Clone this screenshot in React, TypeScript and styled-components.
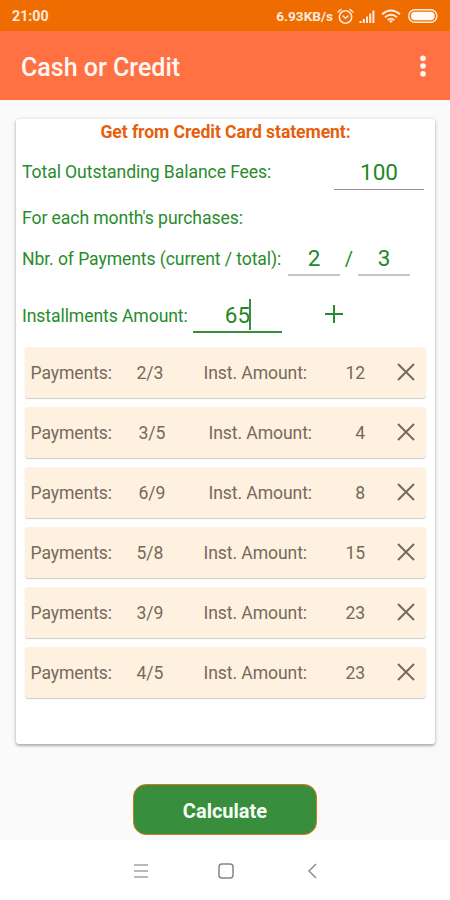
import React from "react";
import styled, { createGlobalStyle } from "styled-components";

const GlobalStyle = createGlobalStyle`
  *, *::before, *::after { box-sizing: border-box; }
  body { margin: 0; background: #fafafa; font-family: Roboto, sans-serif; }
`;

const Screen = styled.div`
  display: flex;
  flex-direction: column;
  width: 450px;
  height: 900px;
  overflow: hidden;
  background: #fafafa;
`;

const StatusBar = styled.div`
  display: flex;
  align-items: center;
  height: 31px;
  padding: 1px 12px 0 12px;
  background: #ef6c00;
  color: #ffe9dc;
  font-size: 13.6px;
  font-weight: 700;
  line-height: 16px;
  white-space: nowrap;
  flex: none;
`;

const Clock = styled.span`
  flex: 1;
  font-size: 14.2px;
`;

const StatusIcon = styled.svg<{ $gap: number }>`
  display: block;
  flex: none;
  margin-left: ${(p) => p.$gap}px;
  fill: none;
  stroke: #ffe9dc;
`;

const AppBar = styled.header`
  display: flex;
  align-items: center;
  justify-content: space-between;
  height: 69px;
  padding: 4px 24px 0 21px;
  background: #ff7043;
  flex: none;
`;

const Title = styled.h1`
  margin: 0;
  color: #fff8f4;
  font-size: 25px;
  font-weight: 500;
  line-height: 30px;
  white-space: nowrap;
`;

const MenuButton = styled.button`
  display: flex;
  margin-top: -4px;
  padding: 0;
  border: 0;
  background: none;
`;

const Card = styled.main`
  display: flex;
  flex-direction: column;
  width: 419px;
  height: 625px;
  margin: 19px 0 0 16px;
  background: #fff;
  border-radius: 3px;
  box-shadow: 0 2px 2px rgba(0, 0, 0, 0.16), 0 1px 4px rgba(0, 0, 0, 0.24);
  flex: none;
`;

const Heading = styled.h2`
  margin: 0;
  height: 26px;
  color: #e65f0c;
  font-size: 17.6px;
  font-weight: 700;
  letter-spacing: -0.09px;
  line-height: 26px;
  text-align: center;
  white-space: nowrap;
`;

const FieldRow = styled.div<{ $height: number; $drop?: number }>`
  display: flex;
  align-items: center;
  height: ${(p) => p.$height}px;
  padding-top: ${(p) => p.$drop ?? 0}px;
  padding-left: 6px;
  flex: none;
`;

const Label = styled.span<{ $width?: number }>`
  width: ${(p) => (p.$width ? `${p.$width}px` : "auto")};
  flex: none;
  margin-top: -1px;
  color: #288c2d;
  font-size: 17.6px;
  letter-spacing: -0.09px;
  line-height: 24px;
  white-space: nowrap;
`;

const Field = styled.div<{ $width: number; $active?: boolean; $light?: boolean }>`
  display: flex;
  align-items: center;
  justify-content: center;
  width: ${(p) => p.$width}px;
  height: 34px;
  flex: none;
  border-bottom: ${(p) => (p.$active ? "2px solid #388e3c" : `${p.$light ? 2 : 1.5}px solid ${p.$light ? "#c6c6c6" : "#929292"}`)};
  color: #1f8726;
  font-size: 22.5px;
  line-height: 30px;
`;

const Caret = styled.span`
  width: 2px;
  height: 31px;
  margin: -2px -1px 0 -1px;
  background: #388e3c;
`;

const Slash = styled.span`
  width: 18px;
  color: #288c2d;
  font-size: 20px;
  line-height: 30px;
  text-align: center;
`;

const AddButton = styled.button`
  display: flex;
  margin: -5px 0 0 43px;
  padding: 0;
  border: 0;
  background: none;
`;

const PaymentList = styled.ul`
  display: flex;
  flex-direction: column;
  gap: 9px;
  margin: 0;
  padding: 1px 9px 0 9px;
  list-style: none;
`;

const PaymentItem = styled.li<{ $shift: boolean }>`
  display: grid;
  grid-template-columns: ${(p) => (p.$shift ? "108px 70px" : "106px 67px")} 1fr 56px 31px;
  align-items: center;
  height: 51px;
  padding: 1px 11px 0 5.5px;
  border-radius: 3px;
  background: #fff1df;
  box-shadow: 0 1px 1px rgba(0, 0, 0, 0.2);
  color: #756a5d;
  font-size: 17.6px;
  letter-spacing: -0.09px;
  line-height: 24px;
  white-space: nowrap;
`;

const Amount = styled.span`
  text-align: right;
  padding-right: 19px;
`;

const RemoveButton = styled.button`
  display: flex;
  justify-content: flex-end;
  margin-top: -2px;
  padding: 0;
  border: 0;
  background: none;
`;

const CalculateButton = styled.button`
  width: 184px;
  height: 51px;
  margin: 40px auto 0 133px;
  padding: 2px 0 0;
  flex: none;
  border: 1.5px solid #d97816;
  border-radius: 13px;
  background: #388e3c;
  color: #f5fff5;
  font-family: inherit;
  font-size: 20px;
  font-weight: 700;
`;

const NavigationBar = styled.nav`
  display: grid;
  grid-template-columns: 85px 89px 10px;
  align-items: center;
  height: 60px;
  margin-top: auto;
  padding: 1px 0 0 133px;
  background: #fff;
  flex: none;
`;

const payments = [
  { part: "2/3", amount: 12 },
  { part: "3/5", amount: 4 },
  { part: "6/9", amount: 8 },
  { part: "5/8", amount: 15 },
  { part: "3/9", amount: 23 },
  { part: "4/5", amount: 23 },
];

function StatusIcons() {
  return (
    <>
      <StatusIcon $gap={4} width="17" height="17" viewBox="0 0 17 17" strokeWidth="1.5" strokeLinecap="round">
        <circle cx="8.5" cy="9" r="6.2" />
        <path d="M1 4 4 1.5M16 4 13 1.5M6 8l2.5 2.2L11 8" />
      </StatusIcon>
      <StatusIcon $gap={5} width="16" height="15" viewBox="0 0 16 15" strokeWidth="2">
        <path d="M1.5 14v-2M4.8 14v-4M8 14V7.5M11.2 14V4.5M14.4 14V1.5" />
      </StatusIcon>
      <StatusIcon $gap={6} width="20" height="15" viewBox="0 0 20 15" strokeWidth="1.9">
        <path d="M1 5.2q9-7.4 18 0M4 8.3q6-5 12 0M6.7 11q3.3-2.7 6.6 0" />
        <path d="m8 12 2 2 2-2q-2-1.5-4 0Z" fill="#ffe9dc" stroke="none" />
      </StatusIcon>
      <StatusIcon $gap={7} width="30" height="14" viewBox="0 0 30 14">
        <rect x=".8" y=".8" width="28" height="12.4" rx="6" strokeWidth="1.4" />
        <rect x="3" y="2.8" width="23.6" height="8.4" rx="4" fill="#fff8f4" stroke="none" />
      </StatusIcon>
    </>
  );
}

export default function App() {
  return (
    <>
      <GlobalStyle />
      <Screen>
        <StatusBar>
          <Clock>21:00</Clock>
          <span>6.93KB/s</span>
          <StatusIcons />
        </StatusBar>
        <AppBar>
          <Title>Cash or Credit</Title>
          <MenuButton aria-label="More options">
            <svg width="6" height="22" viewBox="0 0 6 22" fill="#fff8f4">
              <circle cx="3" cy="3.3" r="2.8" />
              <circle cx="3" cy="11" r="2.8" />
              <circle cx="3" cy="18.7" r="2.8" />
            </svg>
          </MenuButton>
        </AppBar>
        <Card>
          <Heading>Get from Credit Card statement:</Heading>
          <FieldRow $height={55}>
            <Label $width={312}>Total Outstanding Balance Fees:</Label>
            <Field $width={90}>100</Field>
          </FieldRow>
          <FieldRow $height={36}>
            <Label>For each month's purchases:</Label>
          </FieldRow>
          <FieldRow $height={46}>
            <Label $width={266}>Nbr. of Payments (current / total):</Label>
            <Field $width={52} $light>2</Field>
            <Slash>/</Slash>
            <Field $width={52} $light>3</Field>
          </FieldRow>
          <FieldRow $height={64} $drop={4}>
            <Label $width={171}>Installments Amount:</Label>
            <Field $width={89} $active>65<Caret /></Field>
            <AddButton aria-label="Add payment">
              <svg width="18" height="18" viewBox="0 0 18 18" stroke="#288c2d" strokeWidth="2">
                <path d="M9 0v18M0 9h18" />
              </svg>
            </AddButton>
          </FieldRow>
          <PaymentList>
            {payments.map(({ part, amount }) => (
              <PaymentItem key={part} $shift={amount < 10}>
                <span>Payments:</span>
                <span>{part}</span>
                <span>Inst. Amount:</span>
                <Amount>{amount}</Amount>
                <RemoveButton aria-label={`Remove ${part}`}>
                  <svg width="18" height="18" viewBox="0 0 18 18" stroke="#756a5d" strokeWidth="2">
                    <path d="m1 1 16 16M17 1 1 17" />
                  </svg>
                </RemoveButton>
              </PaymentItem>
            ))}
          </PaymentList>
        </Card>
        <CalculateButton>Calculate</CalculateButton>
        <NavigationBar>
          <svg width="16" height="16" viewBox="0 0 16 16" stroke="#a2a2a2" strokeWidth="1.5">
            <path d="M1 2h14M1 8h14M1 14h14" />
          </svg>
          <svg width="16" height="16" viewBox="0 0 16 16" fill="none" stroke="#858585" strokeWidth="1.5">
            <rect x="1" y="1" width="14" height="14" rx="3" />
          </svg>
          <svg width="10" height="16" viewBox="0 0 10 16" fill="none" stroke="#8e8e8e" strokeWidth="1.5">
            <path d="M9 1 2 8l7 7" />
          </svg>
        </NavigationBar>
      </Screen>
    </>
  );
}
